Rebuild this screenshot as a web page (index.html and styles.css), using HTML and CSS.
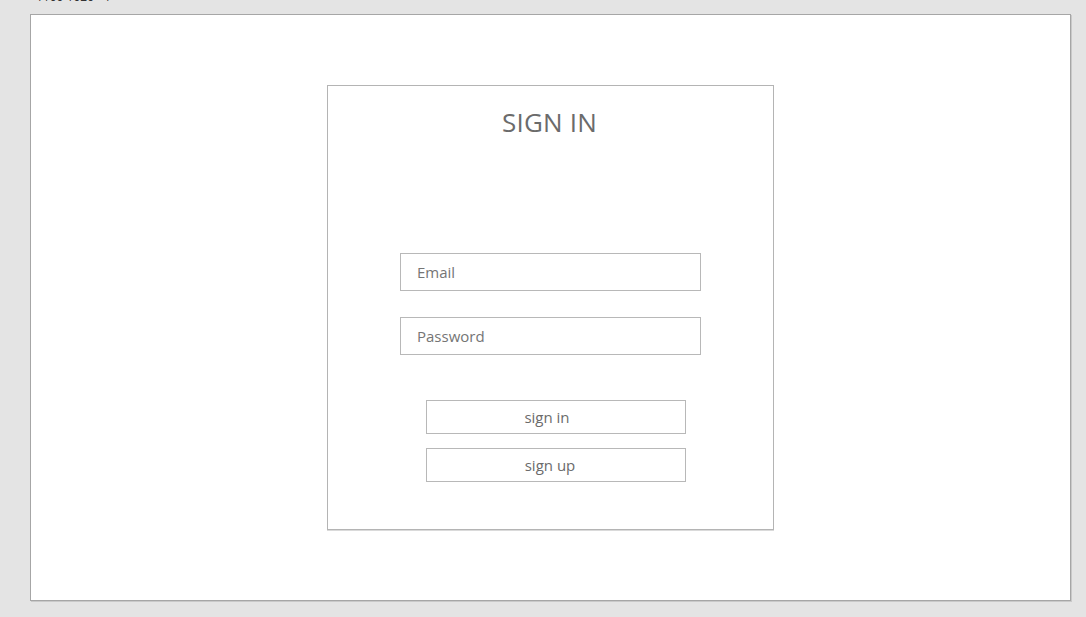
FILE: index.html
```html
<!DOCTYPE html>
<html>
<head>
<meta charset="utf-8">
<link rel="stylesheet" href="styles.css">
</head>
<body>
<div class="caption">1100 1020 - 1</div>
<div class="frame">
  <div class="card">
    <h1 class="title">SIGN IN</h1>
    <div class="fields">
      <div class="field">Email</div>
      <div class="field">Password</div>
    </div>
    <div class="actions">
      <div class="btn btn-in">sign in</div>
      <div class="btn btn-up">sign up</div>
    </div>
  </div>
</div>
</body>
</html>
```
FILE: styles.css
```css
html, body {
  margin: 0;
  padding: 0;
  background: #e4e4e4;
  font-family: "Open Sans", "Noto Sans", sans-serif;
}
body {
  padding-left: 30px;
  height: 617px;
  overflow: hidden;
}
.caption {
  height: 14px;
  font-size: 12px;
  line-height: 12px;
  color: #333;
  padding-left: 6px;
  transform: translateY(-9px);
}
.frame {
  box-sizing: border-box;
  width: 1041px;
  height: 587px;
  background: #fff;
  border: 1px solid #a6a6a6;
  box-shadow: 1px 1px 0 #c9c9c9;
  display: flex;
  flex-direction: column;
  align-items: center;
  padding-top: 70px;
}
.card {
  box-sizing: border-box;
  width: 447px;
  height: 445px;
  border: 1px solid #b4b4b4;
  box-shadow: 0 1px 0 #dadada;
  display: flex;
  flex-direction: column;
  align-items: center;
}
.title {
  margin: 19px 0 0 0;
  font-weight: 400;
  font-size: 26px;
  line-height: 35px;
  color: #6b6b6b;
  letter-spacing: 0.2px;
  padding-right: 2px;
}
.fields {
  margin-top: 113px;
  display: flex;
  flex-direction: column;
  gap: 26px;
}
.field {
  box-sizing: border-box;
  width: 301px;
  height: 38px;
  border: 1px solid #b8b8b8;
  padding-left: 16px;
  font-size: 15px;
  line-height: 37px;
  color: #757575;
}
.actions {
  margin-top: 45px;
  padding-left: 11px;
  display: flex;
  flex-direction: column;
  gap: 14px;
}
.btn {
  box-sizing: border-box;
  width: 260px;
  height: 34px;
  border: 1px solid #b8b8b8;
  font-size: 15px;
  line-height: 33px;
  color: #6b6b6b;
  text-align: center;
}
.btn-in {
  padding-right: 18px;
}
.btn-up {
  padding-right: 12px;
}
```
